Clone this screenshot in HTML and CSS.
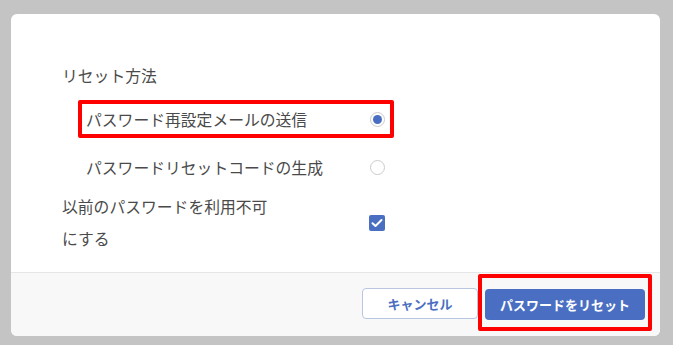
FILE: index.html
```html
<!DOCTYPE html>
<html lang="ja">
<head>
    <meta charset="UTF-8">
    <meta name="viewport" content="width=device-width, initial-scale=1.0">
    <title>パスワードをリセット</title>
    <link rel="stylesheet" href="styles.css">
</head>
<body>
    <div class="dialog">
        <div class="dialog-body">
            <div class="section-title">リセット方法</div>

            <div class="option">
                <label class="option-box highlight">
                    <span>パスワード再設定メールの送信</span>
                    <span class="radio checked"></span>
                </label>
            </div>

            <div class="option">
                <label class="option-box">
                    <span>パスワードリセットコードの生成</span>
                    <span class="radio"></span>
                </label>
            </div>

            <div class="check-row">
                <div class="check-label">以前のパスワードを利用不可にする</div>
                <span class="checkbox">
                    <svg width="12" height="10" viewBox="0 0 12 10">
                        <path d="M1.5 5.2 L4.5 8 L10.5 2" fill="none" stroke="#fff" stroke-width="2" stroke-linecap="round" stroke-linejoin="round"/>
                    </svg>
                </span>
            </div>
        </div>

        <div class="dialog-footer">
            <button class="btn btn-cancel">キャンセル</button>
            <div class="btn-wrap highlight">
                <button class="btn btn-primary">パスワードをリセット</button>
            </div>
        </div>
    </div>
</body>
</html>
```

FILE: styles.css
```css
* {
    margin: 0;
    padding: 0;
    box-sizing: border-box;
    font-family: "Noto Sans CJK JP", "Noto Sans", sans-serif;
}

body {
    background: #c4c4c4;
    padding: 14px 13px 9px 11px;
}

.dialog {
    width: 649px;
    height: 322px;
    background: white;
    border-radius: 6px;
    overflow: hidden;
    display: flex;
    flex-direction: column;
}

.dialog-body {
    flex: 1;
    padding: 46px 0 0 51px;
    color: #4a4a4a;
    font-size: 15.8px;
}

.section-title {
    line-height: 32px;
    margin-bottom: 3px;
}

.option {
    height: 48px;
    display: flex;
    align-items: center;
    margin-left: 16px;
}

.option-box {
    width: 316px;
    height: 38px;
    border: 4px solid transparent;
    border-radius: 2px;
    padding: 0 5px 0 4px;
    display: flex;
    align-items: center;
    justify-content: space-between;
}

.highlight {
    border-color: #f00;
}

.radio {
    width: 15px;
    height: 15px;
    border: 1px solid #ccc;
    border-radius: 50%;
    background: white;
    display: flex;
    align-items: center;
    justify-content: center;
}

.radio.checked::after {
    content: "";
    width: 9px;
    height: 9px;
    border-radius: 50%;
    background: #4a6fc2;
}

.check-row {
    width: 323px;
    display: flex;
    align-items: center;
    justify-content: space-between;
}

.check-label {
    width: 215px;
    line-height: 32px;
}

.checkbox {
    width: 16px;
    height: 16px;
    border-radius: 2px;
    background: #4a6fc2;
    display: flex;
    align-items: center;
    justify-content: center;
}

.dialog-footer {
    height: 64px;
    border-top: 1px solid #e6e6e6;
    background: #f8f8f8;
    display: flex;
    align-items: center;
    justify-content: flex-end;
    padding-right: 8px;
}

.btn {
    height: 31px;
    border-radius: 4px;
    font-size: 13px;
    font-weight: bold;
    cursor: pointer;
}

.btn-cancel {
    width: 116px;
    background: white;
    border: 1px solid #b9c6e2;
    color: #4a6fc2;
    margin-top: -2px;
}

.btn-wrap {
    width: 174px;
    height: 57px;
    border: 4px solid #f00;
    border-radius: 2px;
    padding: 11px 3px 7px;
    margin-top: -4px;
}

.btn-primary {
    width: 160px;
    background: #4a6fc2;
    border: none;
    color: white;
}
```
